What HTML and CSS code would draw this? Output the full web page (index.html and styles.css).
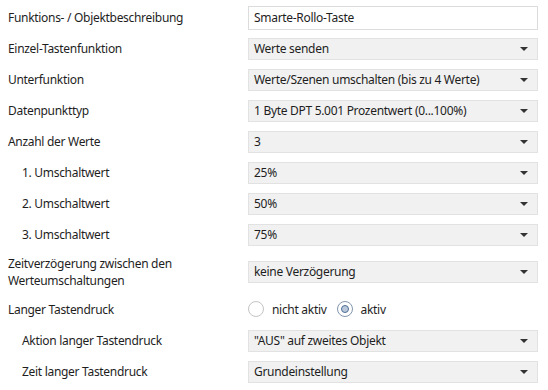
FILE: index.html
```html
<!DOCTYPE html>
<html>
  <head>
    <title>Parameter</title>
    <link rel="stylesheet" href="styles.css">
  </head>
  <body>
    <div class="param-list">
      <div class="param-row">
        <div class="param-label">Funktions- / Objektbeschreibung</div>
        <input class="param-input" value="Smarte-Rollo-Taste">
      </div>

      <div class="param-row">
        <div class="param-label">Einzel-Tastenfunktion</div>
        <div class="param-select">Werte senden<span class="select-arrow"></span></div>
      </div>

      <div class="param-row">
        <div class="param-label">Unterfunktion</div>
        <div class="param-select">Werte/Szenen umschalten (bis zu 4 Werte)<span class="select-arrow"></span></div>
      </div>

      <div class="param-row">
        <div class="param-label">Datenpunkttyp</div>
        <div class="param-select">1 Byte DPT 5.001 Prozentwert (0...100%)<span class="select-arrow"></span></div>
      </div>

      <div class="param-row">
        <div class="param-label">Anzahl der Werte</div>
        <div class="param-select">3<span class="select-arrow"></span></div>
      </div>

      <div class="param-row">
        <div class="param-label is-indented">1. Umschaltwert</div>
        <div class="param-select">25%<span class="select-arrow"></span></div>
      </div>

      <div class="param-row">
        <div class="param-label is-indented">2. Umschaltwert</div>
        <div class="param-select">50%<span class="select-arrow"></span></div>
      </div>

      <div class="param-row">
        <div class="param-label is-indented">3. Umschaltwert</div>
        <div class="param-select">75%<span class="select-arrow"></span></div>
      </div>

      <div class="param-row is-tall">
        <div class="param-label">Zeitverzögerung zwischen den<br>Werteumschaltungen</div>
        <div class="param-select">keine Verzögerung<span class="select-arrow"></span></div>
      </div>

      <div class="param-row is-radio">
        <div class="param-label">Langer Tastendruck</div>
        <div class="radio-group">
          <label class="radio-option"><span class="radio-circle"></span>nicht aktiv</label>
          <label class="radio-option"><span class="radio-circle is-checked"></span>aktiv</label>
        </div>
      </div>

      <div class="param-row">
        <div class="param-label is-indented">Aktion langer Tastendruck</div>
        <div class="param-select">"AUS" auf zweites Objekt<span class="select-arrow"></span></div>
      </div>

      <div class="param-row">
        <div class="param-label is-indented">Zeit langer Tastendruck</div>
        <div class="param-select">Grundeinstellung<span class="select-arrow"></span></div>
      </div>
    </div>
  </body>
</html>
```

FILE: styles.css
```css
body {
  margin: 0;
  background-color: white;
  font-family: "Noto Sans", "Open Sans", sans-serif;
  font-size: 12px;
  letter-spacing: -0.3px;
  color: #1e1e1e;
}
.param-list {
  padding-top: 2px;
  padding-left: 8px;
  width: 530px;
}
.param-row {
  display: grid;
  grid-template-columns: 240px 290px;
  align-items: center;
  height: 31px;
}
.param-row.is-tall {
  height: 43px;
}
.param-row.is-radio {
  height: 32px;
}
.param-label {
  line-height: 17px;
}
.is-indented {
  padding-left: 14px;
}
.param-input {
  box-sizing: border-box;
  height: 24px;
  width: 290px;
  margin: 0;
  padding: 0 5px;
  border: 1px solid #dcdcdc;
  background-color: white;
  font-family: inherit;
  font-size: 12px;
  letter-spacing: -0.3px;
  color: #1e1e1e;
  outline: none;
}
.param-select {
  position: relative;
  box-sizing: border-box;
  height: 22px;
  line-height: 20px;
  padding: 0 5px;
  border: 1px solid #e2e2e2;
  background-color: #f1f1f1;
}
.select-arrow {
  position: absolute;
  right: 9px;
  top: 8px;
  width: 0;
  height: 0;
  border-left: 4px solid transparent;
  border-right: 4px solid transparent;
  border-top: 4px solid #333;
}
.radio-group {
  display: flex;
  align-items: center;
  gap: 10px;
}
.radio-option {
  display: flex;
  align-items: center;
  gap: 8px;
}
.radio-circle {
  box-sizing: border-box;
  width: 16px;
  height: 16px;
  border: 1px solid #c4c4c4;
  border-radius: 50%;
  background-color: white;
  position: relative;
}
.radio-circle.is-checked {
  border-color: #8296ad;
}
.radio-circle.is-checked::after {
  content: "";
  position: absolute;
  left: 3px;
  top: 3px;
  box-sizing: border-box;
  width: 8px;
  height: 8px;
  border-radius: 50%;
  border: 1px solid #4f6f94;
  background-color: #b9c9db;
}
```
